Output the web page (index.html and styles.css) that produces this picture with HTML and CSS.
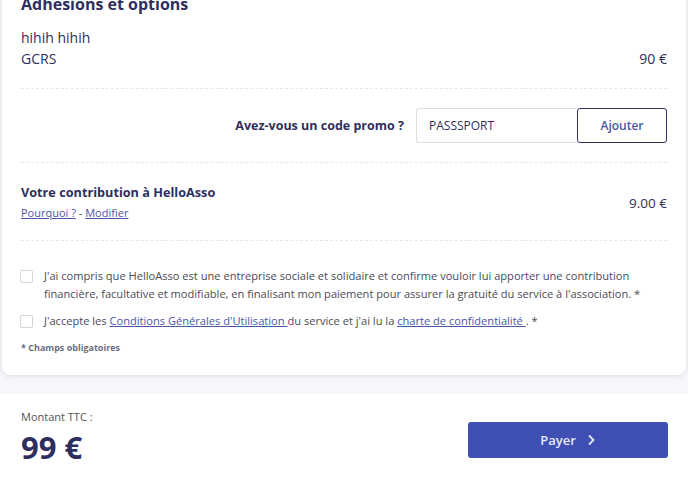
FILE: index.html
```html
<!DOCTYPE html>
<html lang="fr">
<head>
    <meta charset="UTF-8">
    <meta name="viewport" content="width=device-width, initial-scale=1.0">
    <title>Récapitulatif</title>
    <link rel="stylesheet" href="styles.css">
</head>
<body>
    <div class="card">
        <h2 class="card-title">Adhesions et options</h2>

        <div class="section item">
            <div class="item-name">hihih hihih</div>
            <div class="row">
                <span>GCRS</span>
                <span>90 €</span>
            </div>
        </div>

        <div class="section promo">
            <label for="promo" class="promo-label">Avez-vous un code promo ?</label>
            <input type="text" id="promo" class="promo-input" value="PASSSPORT">
            <button class="promo-btn">Ajouter</button>
        </div>

        <div class="section contrib">
            <div>
                <div class="contrib-title">Votre contribution à HelloAsso</div>
                <div class="contrib-links"><a href="#">Pourquoi ?</a> - <a href="#">Modifier</a></div>
            </div>
            <span class="contrib-price">9.00 €</span>
        </div>

        <div class="checks">
            <label class="check">
                <span class="box"></span>
                <span>J'ai compris que HelloAsso est une entreprise sociale et solidaire et confirme vouloir lui apporter une contribution financière, facultative et modifiable, en finalisant mon paiement pour assurer la gratuité du service à l'association. *</span>
            </label>
            <label class="check">
                <span class="box"></span>
                <span>J'accepte les <a href="#">Conditions Générales d'Utilisation </a>du service et j'ai lu la <a href="#">charte de confidentialité </a>. *</span>
            </label>
            <p class="required">* Champs obligatoires</p>
        </div>
    </div>

    <div class="total">
        <div>
            <div class="total-label">Montant TTC :</div>
            <div class="total-amount">99 €</div>
        </div>
        <button class="pay-btn">Payer
            <svg width="10" height="12" viewBox="0 0 10 12"><path d="M3 1.5 7.5 6 3 10.5" fill="none" stroke="currentColor" stroke-width="1.8"/></svg>
        </button>
    </div>
</body>
</html>
```

FILE: styles.css
```css
/* Reset */
* {
    margin: 0;
    padding: 0;
    box-sizing: border-box;
}

body {
    font-family: 'Open Sans', 'Liberation Sans', sans-serif;
    background: #f6f7fa;
    color: #2e2f5e;
    overflow: hidden;
}

a {
    color: #4c55a6;
    text-decoration: underline;
}

/* Card */
.card {
    margin: -8px 2px 0;
    background: #fff;
    border-radius: 0 0 8px 8px;
    box-shadow: 0 1px 4px rgba(0, 0, 0, 0.12);
    padding: 0 19px 20px;
}

.card-title {
    font-size: 16px;
    font-weight: 700;
    line-height: 24px;
}

.section {
    border-bottom: 1px dashed #e6e7ee;
    padding: 19px 0;
}

.item {
    padding-top: 11px;
    font-size: 14px;
    line-height: 21px;
}

.row {
    display: flex;
    justify-content: space-between;
}

/* Promo code */
.promo {
    display: flex;
    justify-content: flex-end;
    align-items: center;
}

.promo-label {
    font-size: 12.5px;
    font-weight: 700;
    margin-right: 12px;
}

.promo-input {
    width: 161px;
    height: 35px;
    border: 1px solid #dcdde6;
    border-right: none;
    border-radius: 3px 0 0 3px;
    padding: 0 12px;
    font-family: inherit;
    font-size: 12px;
    color: #2e2f5e;
    outline: none;
}

.promo-btn {
    width: 90px;
    height: 35px;
    background: #fff;
    border: 1px solid #2e2f5e;
    border-radius: 3px;
    font-family: inherit;
    font-size: 12px;
    font-weight: 600;
    color: #4c55a6;
}

/* Contribution */
.contrib {
    display: flex;
    justify-content: space-between;
    align-items: center;
    font-size: 13px;
    padding-bottom: 16px;
}

.contrib-title {
    font-size: 12.7px;
    font-weight: 700;
    line-height: 20px;
}

.contrib-links {
    font-size: 11px;
    line-height: 22px;
    color: #555;
}

.contrib-price {
    font-size: 13.5px;
}

/* Checkboxes */
.checks {
    padding-top: 26px;
}

.check {
    display: flex;
    gap: 11px;
    font-size: 11.1px;
    line-height: 18px;
    color: #4a4a58;
    margin-bottom: 9px;
}

.box {
    flex: none;
    width: 13px;
    height: 13px;
    margin-top: 3px;
    margin-left: -1px;
    border: 1px solid #d5d6dd;
    border-radius: 2px;
}

.required {
    font-size: 9px;
    font-weight: 700;
    color: #6b6d85;
    line-height: 14px;
    margin-top: 11px;
}

/* Total */
.total {
    margin: 19px 0 0;
    background: #fff;
    padding: 15px 20px 18px 21px;
    display: flex;
    justify-content: space-between;
    align-items: center;
}

.total-label {
    font-size: 11px;
    line-height: 16px;
    color: #555;
}

.total-amount {
    font-size: 31px;
    font-weight: 700;
    line-height: 40px;
    margin-top: 2px;
}

.pay-btn {
    width: 200px;
    height: 36px;
    margin-top: 3px;
    background: #3f4fb4;
    border: none;
    border-radius: 3px;
    color: #e8e9f6;
    font-family: inherit;
    font-size: 13px;
    font-weight: 600;
    display: flex;
    justify-content: center;
    align-items: center;
    gap: 10px;
}
```
